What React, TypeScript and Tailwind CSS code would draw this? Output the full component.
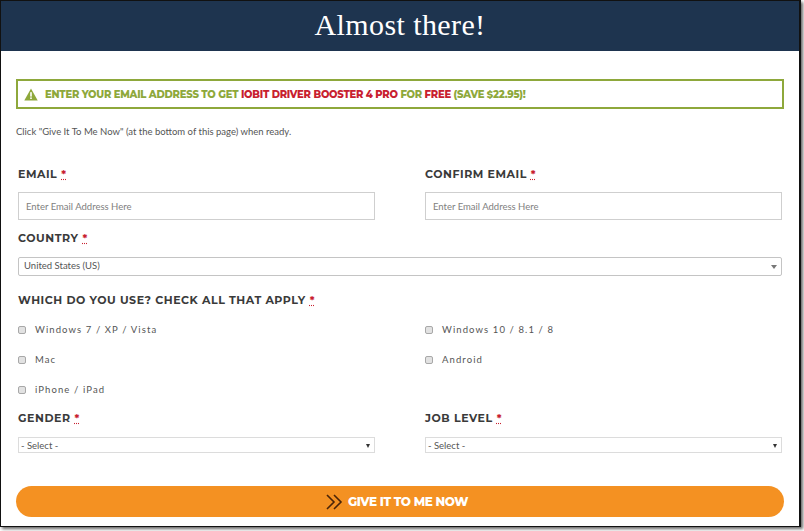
function Req() {
  return (
    <span className="ml-[4px] text-[#c8202f] underline decoration-dotted decoration-[#c8202f]">*</span>
  );
}

function Label({ text }: { text: string }) {
  return (
    <div className="h-[18px] text-[11px] leading-[18px] font-bold tracking-[0.55px] text-[#3a3a3a] font-['Montserrat','Liberation_Sans',sans-serif] uppercase">
      {text}
      <Req />
    </div>
  );
}

function TextInput() {
  return (
    <div className="h-[28px] border border-[#cfcfcf] bg-white pl-[7px] text-[9.5px] leading-[27px] text-[#808080]">
      Enter Email Address Here
    </div>
  );
}

function SelectBox() {
  return (
    <div className="flex h-[16px] items-center justify-between border border-[#dcdcdc] bg-white pl-[2px] pr-[4px] pt-[1px] text-[9.5px] leading-[14px] text-[#555555]">
      <span>- Select -</span>
      <span className="h-0 w-0 border-x-[2.5px] border-t-[4px] border-x-transparent border-t-[#333333]"></span>
    </div>
  );
}

function Check({ text }: { text: string }) {
  return (
    <label className="flex h-[30px] items-center text-[9.5px] tracking-[1.1px] text-[#555555]">
      <span className="mr-[9px] h-[8px] w-[8px] rounded-[2px] border border-[#a8a8a8] bg-[#e2e2e2]"></span>
      <span>{text}</span>
    </label>
  );
}

export default function App() {
  return (
    <div className="h-[531px] w-[804px] overflow-hidden bg-white font-['Lato','Liberation_Sans',sans-serif]">
      <div className="h-[527px] w-[801px] border-x border-y border-[#111111] border-r-2 shadow-[2px_2px_3px_#666666]">
        <div className="flex h-[50px] items-center justify-center bg-[#1e344f] pb-[3px] font-['Liberation_Serif',serif] text-[30px] tracking-[0.4px] text-white">
          Almost there!
        </div>
        <div className="px-[15px] pt-[28px]">
          <div className="flex h-[30px] items-center border-[2px] border-[#8ea83b] pl-[6px] font-['Montserrat','Liberation_Sans',sans-serif] text-[10px] font-extrabold tracking-[-0.24px] text-[#8ea83b]">
            <svg width="14" height="13" viewBox="0 0 14 13" className="mr-[7px]">
              <path d="M7 0.5 L13.7 12.5 H0.3 Z" fill="#8ea83b" />
              <rect x="6.2" y="4.2" width="1.6" height="4.4" fill="#fff" />
              <rect x="6.2" y="9.4" width="1.6" height="1.6" fill="#fff" />
            </svg>
            <span>
              ENTER YOUR EMAIL ADDRESS TO GET <span className="text-[#c8202f]">IOBIT DRIVER BOOSTER 4 PRO</span> FOR{" "}
              <span className="text-[#c8202f]">FREE</span> (SAVE $22.95)!
            </span>
          </div>
          <p className="mt-[16px] text-[9.5px] leading-[14px] text-[#555555]">
            Click "Give It To Me Now" (at the bottom of this page) when ready.
          </p>

          <div className="mt-[26px] px-[2px]">
            <div className="grid grid-cols-2 gap-x-[50px]">
              <div>
                <Label text="Email" />
                <div className="mt-[9px]">
                  <TextInput />
                </div>
              </div>
              <div>
                <Label text="Confirm Email" />
                <div className="mt-[9px]">
                  <TextInput />
                </div>
              </div>
            </div>

            <div className="mt-[9px]">
              <Label text="Country" />
              <div className="mt-[10px] flex h-[19px] items-center justify-between rounded-[2px] border border-[#c4c4c4] bg-white pl-[5px] pr-[4px] text-[9.5px] text-[#555555]">
                <span>United States (US)</span>
                <span className="h-0 w-0 border-x-[3px] border-t-[4px] border-x-transparent border-t-[#777777]"></span>
              </div>
            </div>

            <div className="mt-[15px]">
              <Label text="Which do you use? Check all that apply" />
              <div className="mt-[6px] grid grid-cols-2 gap-x-[50px]">
                <Check text="Windows 7 / XP / Vista" />
                <Check text="Windows 10 / 8.1 / 8" />
                <Check text="Mac" />
                <Check text="Android" />
                <Check text="iPhone / iPad" />
              </div>
            </div>

            <div className="mt-[4px] grid grid-cols-2 gap-x-[50px]">
              <div>
                <Label text="Gender" />
                <div className="mt-[10px]">
                  <SelectBox />
                </div>
              </div>
              <div>
                <Label text="Job Level" />
                <div className="mt-[10px]">
                  <SelectBox />
                </div>
              </div>
            </div>
          </div>

          <button className="mt-[33px] flex h-[31px] w-full items-center justify-center rounded-full bg-[#f49122] pr-[6px] pt-[1px] font-['Montserrat','Liberation_Sans',sans-serif] text-[12px] font-extrabold tracking-[-0.4px] text-white">
            <svg width="17" height="16" viewBox="0 0 17 16" className="mr-[5px]" fill="none" stroke="#4a2408" strokeWidth="1.6">
              <path d="M1 1 L8 8 L1 15" />
              <path d="M8 1 L15 8 L8 15" />
            </svg>
            GIVE IT TO ME NOW
          </button>
        </div>
      </div>
    </div>
  );
}
